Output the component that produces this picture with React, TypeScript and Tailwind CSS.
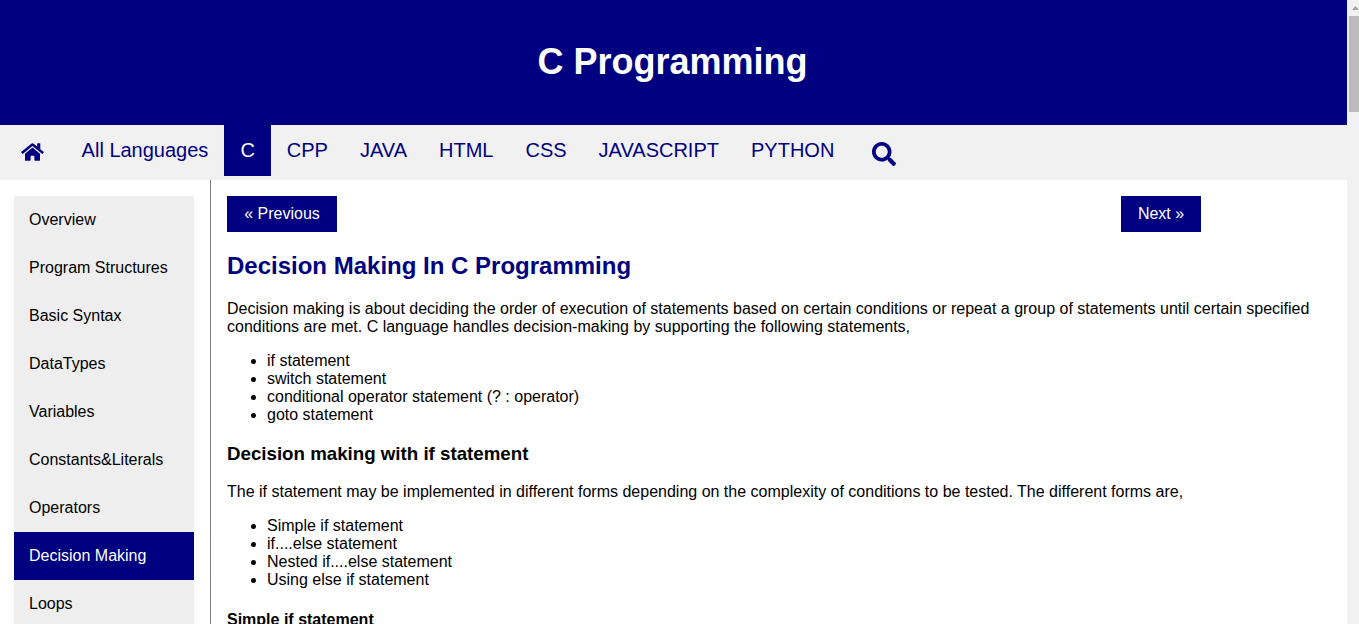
import React from "react";

const langs = ["All Languages", "C", "CPP", "JAVA", "HTML", "CSS", "JAVASCRIPT", "PYTHON"];
const side = ["Overview", "Program Structures", "Basic Syntax", "DataTypes", "Variables", "Constants&Literals", "Operators", "Decision Making", "Loops"];

export default function App() {
  return (
    <div className="h-[624px] overflow-hidden flex bg-white text-black font-['Liberation_Sans',Arial,sans-serif]">
      <div className="w-[1347px] shrink-0">
        <header className="h-[125px] bg-[#000080] flex items-center justify-center text-white text-[36px] font-bold pb-[2px] pr-[2px]">C Programming</header>
        <nav className="h-[55px] bg-[#f1f1f1] flex items-start text-[20px] text-[#000080]">
          <a className="w-[65.6px] h-[51px] flex items-center justify-center pt-[3px]">
            <svg width="23" height="20" viewBox="0 0 576 512" fill="#000080"><path d="M280.37 148.26L96 300.11V464a16 16 0 0 0 16 16l112.06-.29a16 16 0 0 0 15.92-16V368a16 16 0 0 1 16-16h64a16 16 0 0 1 16 16v95.64a16 16 0 0 0 16 16.05L464 480a16 16 0 0 0 16-16V300L295.67 148.26a12.19 12.19 0 0 0-15.3 0zM571.6 251.47L488 182.56V44.05a12 12 0 0 0-12-12h-56a12 12 0 0 0-12 12v72.61L318.47 43a48 48 0 0 0-61 0L4.34 251.47a12 12 0 0 0-1.6 16.9l25.5 31A12 12 0 0 0 45.15 301l235.22-193.74a12.19 12.19 0 0 1 15.3 0L530.9 301a12 12 0 0 0 16.9-1.6l25.5-31a12 12 0 0 0-1.7-16.93z"/></svg>
          </a>
          {langs.map((l) => (
            <a key={l} className={`px-4 h-[51px] pb-[2px] flex items-center ${l === "C" ? "bg-[#000080] text-white" : ""}`}>{l}</a>
          ))}
          <a className="ml-[22px] h-[55px] flex items-center pt-[2px]">
            <svg width="24" height="24" viewBox="0 0 512 512" fill="#000080"><path d="M505 442.7L405.3 343c-4.5-4.5-10.6-7-17-7H372c27.6-35.3 44-79.7 44-128C416 93.1 322.9 0 208 0S0 93.1 0 208s93.1 208 208 208c48.3 0 92.7-16.4 128-44v16.3c0 6.4 2.5 12.5 7 17l99.7 99.7c9.4 9.4 24.6 9.4 33.9 0l28.3-28.3c9.4-9.4 9.4-24.6.1-34zM208 336c-70.7 0-128-57.2-128-128 0-70.7 57.2-128 128-128 70.7 0 128 57.2 128 128 0 70.7-57.2 128-128 128z"/></svg>
          </a>
        </nav>
        <div className="flex">
          <aside className="w-[211px] shrink-0 border-r border-[#808080] pt-4 pl-[14px] h-[444px] overflow-hidden">
            <div className="w-[180px] bg-[#eeeeee] text-[16px]">
              {side.map((s) => (
                <div key={s} className={`h-12 flex items-center pl-[15px] ${s === "Decision Making" ? "bg-[#000080] text-white" : ""}`}>{s}</div>
              ))}
            </div>
          </aside>
          <main className="flex-1 pl-[16px] pr-4 pt-4 text-[16px] leading-[18px]">
            <div className="flex justify-between w-[974px]">
              <a className="w-[110px] h-9 bg-[#000080] text-white flex items-center justify-center">« Previous</a>
              <a className="w-20 h-9 bg-[#000080] text-white flex items-center justify-center">Next »</a>
            </div>
            <h1 className="mt-[20px] text-[24px] leading-[28px] font-bold text-[#000080]">Decision Making In C Programming</h1>
            <p className="mt-[20px]">Decision making is about deciding the order of execution of statements based on certain conditions or repeat a group of statements until certain specified conditions are met. C language handles decision-making by supporting the following statements,</p>
            <ul className="mt-4 pl-10 list-disc">
              <li>if statement</li>
              <li>switch statement</li>
              <li>conditional operator statement (? : operator)</li>
              <li>goto statement</li>
            </ul>
            <h2 className="mt-[19px] text-[18.72px] leading-[21px] font-bold">Decision making with if statement</h2>
            <p className="mt-[19px]">The if statement may be implemented in different forms depending on the complexity of conditions to be tested. The different forms are,</p>
            <ul className="mt-4 pl-10 list-disc">
              <li>Simple if statement</li>
              <li>if....else statement</li>
              <li>Nested if....else statement</li>
              <li>Using else if statement</li>
            </ul>
            <h3 className="mt-[22px] font-bold">Simple if statement</h3>
          </main>
        </div>
      </div>
      <div className="w-3 bg-[#f1f1f1] shrink-0 relative">
        <div className="absolute left-[2px] right-0 top-[16px] h-[96px] bg-[#bcbcbc]" />
        <svg className="absolute top-[6px] left-[5px]" width="7" height="4" viewBox="0 0 7 4" fill="#a3a3a3"><path d="M3.5 0L7 4H0z"/></svg>
      </div>
    </div>
  );
}
